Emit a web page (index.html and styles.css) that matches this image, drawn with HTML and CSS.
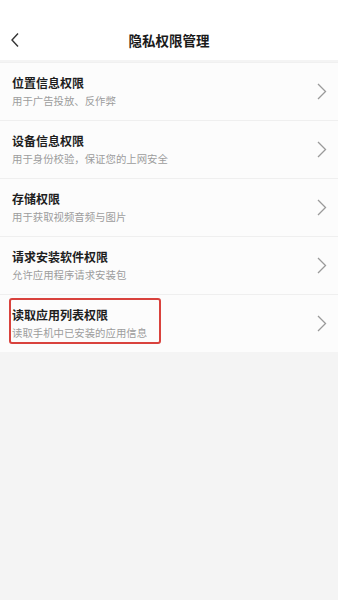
FILE: index.html
```html
<!DOCTYPE html>
<html lang="zh-CN">
<head>
<meta charset="utf-8">
<link rel="stylesheet" href="styles.css">
</head>
<body>
<header class="header">
  <div class="nav">
    <svg class="back" width="10" height="16" viewBox="0 0 10 16"><path d="M8 1.5 L2 8 L8 14.5" fill="none" stroke="#333" stroke-width="1.4"/></svg>
    <h1 class="title">隐私权限管理</h1>
  </div>
</header>
<ul class="list">
  <li class="row">
    <div class="text"><div class="name">位置信息权限</div><div class="desc">用于广告投放、反作弊</div></div>
    <svg class="arrow" width="10" height="17" viewBox="0 0 10 17"><path d="M1 1 L8.5 8.5 L1 16" fill="none" stroke="#9a9a9a" stroke-width="1.3"/></svg>
  </li>
  <li class="row">
    <div class="text"><div class="name">设备信息权限</div><div class="desc">用于身份校验，保证您的上网安全</div></div>
    <svg class="arrow" width="10" height="17" viewBox="0 0 10 17"><path d="M1 1 L8.5 8.5 L1 16" fill="none" stroke="#9a9a9a" stroke-width="1.3"/></svg>
  </li>
  <li class="row">
    <div class="text"><div class="name">存储权限</div><div class="desc">用于获取视频音频与图片</div></div>
    <svg class="arrow" width="10" height="17" viewBox="0 0 10 17"><path d="M1 1 L8.5 8.5 L1 16" fill="none" stroke="#9a9a9a" stroke-width="1.3"/></svg>
  </li>
  <li class="row">
    <div class="text"><div class="name">请求安装软件权限</div><div class="desc">允许应用程序请求安装包</div></div>
    <svg class="arrow" width="10" height="17" viewBox="0 0 10 17"><path d="M1 1 L8.5 8.5 L1 16" fill="none" stroke="#9a9a9a" stroke-width="1.3"/></svg>
  </li>
  <li class="row last">
    <div class="text"><div class="name">读取应用列表权限</div><div class="desc">读取手机中已安装的应用信息</div></div>
    <svg class="arrow" width="10" height="17" viewBox="0 0 10 17"><path d="M1 1 L8.5 8.5 L1 16" fill="none" stroke="#9a9a9a" stroke-width="1.3"/></svg>
    <div class="highlight"></div>
  </li>
</ul>
</body>
</html>
```
FILE: styles.css
```css
html, body {
  margin: 0;
  padding: 0;
}
body {
  background: #f4f4f4;
  font-family: "Noto Sans CJK SC", "Noto Sans", sans-serif;
  width: 338px;
  min-height: 600px;
}
.header {
  background: #ffffff;
  padding-top: 20px;
  height: 40px;
}
.nav {
  position: relative;
  height: 40px;
  display: flex;
  align-items: center;
  justify-content: center;
}
.back {
  position: absolute;
  left: 10px;
  top: 12px;
}
.title {
  margin: 0;
  font-size: 13.5px;
  font-weight: 700;
  color: #1a1a1a;
  line-height: 40px;
}
.list {
  list-style: none;
  margin: 2px 0 0;
  padding: 0;
  border-top: 1px solid #f0f0f0;
}
.row {
  position: relative;
  display: flex;
  align-items: center;
  height: 57px;
  background: #fcfcfc;
  border-bottom: 1px solid #efefef;
  padding: 0 11px 0 12px;
}
.row.last {
  border-bottom: none;
}
.text {
  flex: 1;
  align-self: flex-start;
  padding-top: 12px;
}
.name {
  font-size: 12px;
  font-weight: 700;
  color: #1e1e1e;
  line-height: 16px;
}
.desc {
  margin-top: 3px;
  font-size: 10.4px;
  color: #9c9c9c;
  line-height: 14px;
}
.arrow {
  display: block;
}
.highlight {
  position: absolute;
  left: 9px;
  top: 3px;
  width: 148px;
  height: 42px;
  border: 2px solid #d9423d;
  border-radius: 3px;
}
```
